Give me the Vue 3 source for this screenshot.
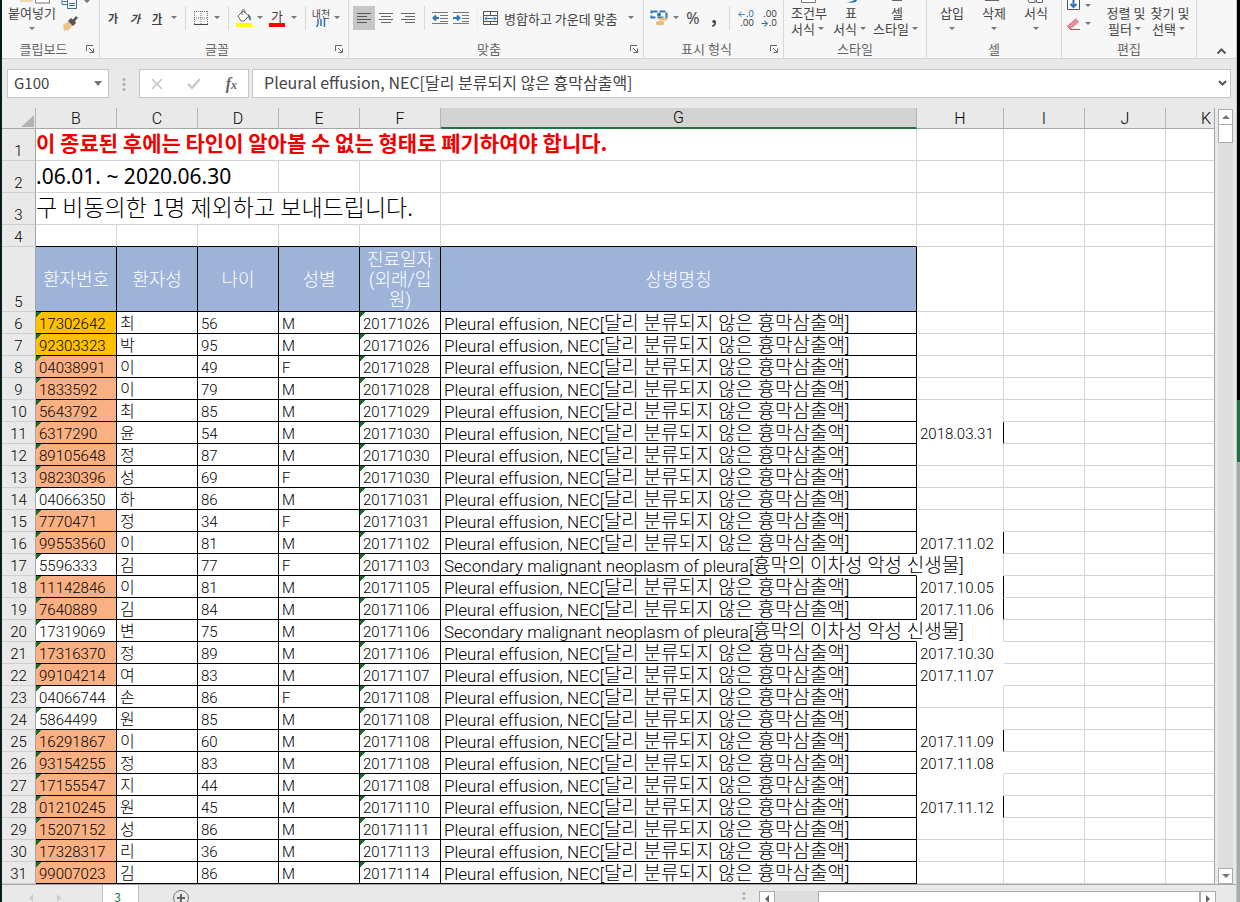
<script setup>
const columns = [
  { name: 'B', cls: 'w-std' },
  { name: 'C', cls: 'w-std' },
  { name: 'D', cls: 'w-std' },
  { name: 'E', cls: 'w-std' },
  { name: 'F', cls: 'w-std' },
  { name: 'G', cls: 'w-wide', selected: true },
  { name: 'H', cls: 'w-date' },
  { name: 'I', cls: 'w-std' },
  { name: 'J', cls: 'w-std' },
  { name: 'K', cls: 'w-std' },
]

const effusion = ['Pleural effusion, NEC[', '달리 분류되지 않은 흉막삼출액]']
const neoplasm = ['Secondary malignant neoplasm of pleura[', '흉막의 이차성 악성 신생물]']

// id, fill, family name, age, sex, visit date, note, note has right border, is neoplasm
const source = [
  ['17302642', 'gold', '최', 56, 'M', '20171026'],
  ['92303323', 'gold', '박', 95, 'M', '20171026'],
  ['04038991', 'peach', '이', 49, 'F', '20171028'],
  ['1833592', 'peach', '이', 79, 'M', '20171028'],
  ['5643792', 'peach', '최', 85, 'M', '20171029'],
  ['6317290', 'peach', '윤', 54, 'M', '20171030', '2018.03.31', true],
  ['89105648', 'peach', '정', 87, 'M', '20171030'],
  ['98230396', 'peach', '성', 69, 'F', '20171030'],
  ['04066350', '', '하', 86, 'M', '20171031'],
  ['7770471', 'peach', '정', 34, 'F', '20171031'],
  ['99553560', 'peach', '이', 81, 'M', '20171102', '2017.11.02', true],
  ['5596333', '', '김', 77, 'F', '20171103', '', false, true],
  ['11142846', 'peach', '이', 81, 'M', '20171105', '2017.10.05', true],
  ['7640889', 'peach', '김', 84, 'M', '20171106', '2017.11.06', true],
  ['17319069', '', '변', 75, 'M', '20171106', '', false, true],
  ['17316370', 'peach', '정', 89, 'M', '20171106', '2017.10.30', false],
  ['99104214', 'peach', '여', 83, 'M', '20171107', '2017.11.07', false],
  ['04066744', '', '손', 86, 'F', '20171108'],
  ['5864499', '', '원', 85, 'M', '20171108'],
  ['16291867', 'peach', '이', 60, 'M', '20171108', '2017.11.09', true],
  ['93154255', 'peach', '정', 83, 'M', '20171108', '2017.11.08', false],
  ['17155547', 'peach', '지', 44, 'M', '20171108'],
  ['01210245', 'peach', '원', 45, 'M', '20171110', '2017.11.12', true],
  ['15207152', 'peach', '성', 86, 'M', '20171111'],
  ['17328317', 'peach', '리', 36, 'M', '20171113'],
  ['99007023', 'peach', '김', 86, 'M', '20171114'],
]

const filled = (r) => !!r && (!!r[6] || !!r[8])

const rows = source.map((r, i) => ({
  num: i + 6,
  id: r[0],
  fill: r[1],
  name: r[2],
  age: r[3],
  sex: r[4],
  date: r[5],
  note: r[6] || '',
  spill: !!r[8],
  text: r[8] ? neoplasm : effusion,
  noteClasses: {
    'no-bottom': filled(r) || filled(source[i + 1]),
    'no-right': !!r[6] && !r[7],
    'ink-right': !!r[7],
  },
}))

const heads = ['환자번호', '환자성', '나이', '성별', '진료일자 (외래/입원)', '상병명칭']
const styleButtons = [['조건부', '서식', 'w50'], ['표', '서식', 'w34'], ['셀', '스타일', 'w58']]
const cellButtons = ['삽입', '삭제', '서식']
const findButtons = ['정렬 및|필터', '찾기 및|선택']
</script>

<template>
  <div class="desktop">
    <div class="app-window">
      <header class="ribbon">
        <section class="group g-clip">
          <div class="tools">
            <button class="stack paste" aria-label="붙여넣기">
              <svg class="peek" width="44" height="5" viewBox="0 0 44 5"><path d="M10 0v2h13V0" fill="#f0d9ae" /><path d="M25.500 0v3h14V0" fill="#fff" stroke="#777" /></svg>
              <span>붙여넣기</span><i class="arrow"></i>
            </button>
            <div class="clip-side">
              <div class="line">
                <svg width="18" height="10" viewBox="0 0 18 10"><path d="M1 0v4.500h6" fill="none" stroke="#41719c" /><path d="M6.500 0v8.500h9V0M8 3.500h6M8 5.500h6M2 1.500h4" fill="none" stroke="#41719c" /></svg>
                <i class="arrow"></i>
              </div>
              <svg width="18" height="18" viewBox="0 0 18 18"><path d="M2 11l6-4 4 4-5 6-2-1-2 1z" fill="#efc389" /><path d="M7 7l3-3 2 1.500L15 2l2 2-3 3 1 2-3 3z" fill="#555" /></svg>
            </div>
          </div>
          <div class="caption"><span>클립보드</span><svg class="launch" width="9" height="9" viewBox="0 0 9 9"><path d="M.5 6V.5H7M3 3l4 4M7.500 3.500v4h-4" fill="none" stroke="#666" /></svg></div>
        </section>

        <section class="group g-font">
          <div class="tools mid">
            <button class="t22 strong">가</button>
            <button class="t22 strong slant">가</button>
            <button class="t22 strong under">가</button>
            <i class="arrow"></i><i class="bar"></i>
            <button class="t20" aria-label="테두리"><svg width="14" height="14" viewBox="0 0 14 14"><path d="M.5 0v14M7 0v14M13.500 0v14M0 .5h14M0 7h14" stroke="#777" stroke-dasharray="1 1" fill="none" /><path d="M0 13.500h14" stroke="#444" /></svg></button>
            <i class="arrow"></i><i class="bar"></i>
            <button class="t20" aria-label="채우기 색"><svg width="18" height="18" viewBox="0 0 18 18"><path d="M3 7l5-5 6 5-5 5H6z" fill="#fff" stroke="#666" /><path d="M7 6V1.500q1.500-2 3 0V4" fill="none" stroke="#666" /><path d="M13 5q4 2 2.500 7Q13 10 13 5z" fill="#41719c" /><path d="M1 14h16v4H1z" fill="#ff0" /></svg></button>
            <i class="arrow"></i>
            <button class="t22 color-a"><span>가</span></button>
            <i class="arrow"></i><i class="bar"></i>
            <button class="t20 ruby" aria-label="윗주 필드"><span>내천</span><svg width="10" height="8" viewBox="0 0 10 8"><path d="M2 0v5L.5 8M5 0v7M8.500 0v8" stroke="#2e75b6" stroke-width="1.500" fill="none" /></svg></button>
            <i class="arrow"></i>
          </div>
          <div class="caption"><span>글꼴</span><svg class="launch" width="9" height="9" viewBox="0 0 9 9"><path d="M.5 6V.5H7M3 3l4 4M7.500 3.500v4h-4" fill="none" stroke="#666" /></svg></div>
        </section>

        <section class="group g-align">
          <div class="tools mid">
            <button class="t22 pressed" aria-label="왼쪽 맞춤"><svg width="14" height="12" viewBox="0 0 14 12"><path d="M0 1.500h14M0 4.500h10M0 7.500h14M0 10.500h10" stroke="#555" /></svg></button>
            <button class="t22" aria-label="가운데 맞춤"><svg width="14" height="12" viewBox="0 0 14 12"><path d="M0 1.500h14M2 4.500h10M0 7.500h14M2 10.500h10" stroke="#666" /></svg></button>
            <button class="t22" aria-label="오른쪽 맞춤"><svg width="14" height="12" viewBox="0 0 14 12"><path d="M0 1.500h14M4 4.500h10M0 7.500h14M4 10.500h10" stroke="#666" /></svg></button>
            <i class="bar"></i>
            <button class="t20" aria-label="내어쓰기"><svg width="16" height="14" viewBox="0 0 16 14"><path d="M0 1.500h16M8 4.500h8M8 7.500h8M8 10.500h8M0 12.500h16" stroke="#777" /><path d="M7 7H2M4 4.500L1.500 7 4 9.500" stroke="#2e75b6" stroke-width="2" fill="none" /></svg></button>
            <button class="t22" aria-label="들여쓰기"><svg width="16" height="14" viewBox="0 0 16 14"><path d="M0 1.500h16M9 4.500h7M9 7.500h7M9 10.500h7M0 12.500h16" stroke="#777" /><path d="M0 7h5M4 4.500L6.500 7 4 9.500" stroke="#2e75b6" stroke-width="2" fill="none" /></svg></button>
            <i class="bar faint"></i>
            <button class="merge"><svg width="16" height="15" viewBox="0 0 16 15"><path d="M.5.5h14v13H.5zM.5 4.500h14M.5 10.500h14M7.500.5v4M7.500 10.500v3" fill="none" stroke="#555" /><path d="M2 7.500h11M4 5.500l-2 2 2 2M11 5.500l2 2-2 2" stroke="#2e75b6" fill="none" /></svg><span>병합하고 가운데 맞춤</span></button>
            <i class="arrow"></i>
          </div>
          <div class="caption"><span>맞춤</span><svg class="launch" width="9" height="9" viewBox="0 0 9 9"><path d="M.5 6V.5H7M3 3l4 4M7.500 3.500v4h-4" fill="none" stroke="#666" /></svg></div>
        </section>

        <section class="group g-num">
          <div class="tools mid">
            <button class="t22" aria-label="회계 표시 형식"><svg width="18" height="16" viewBox="0 0 18 16"><path d="M1.500 1.500h15v6h-15z" fill="#fff" stroke="#2e75b6" stroke-width="2" stroke-dasharray="6 2" /><circle cx="9" cy="4.500" r="2" fill="#2e75b6" /><path d="M9 8.500q4-2 8 0v2H9zM6 12q4-2 8 0v2.500q-4 1.500-8 0z" fill="#eeb872" /></svg></button>
            <i class="arrow"></i>
            <button class="t22 pct">%</button>
            <button class="t20 comma">,</button>
            <i class="bar"></i>
            <button class="dec" aria-label="자릿수 늘림"><span class="blue">←.0</span><span>.00</span></button>
            <button class="dec" aria-label="자릿수 줄임"><span>.00</span><span><b class="blue">→</b>.0</span></button>
          </div>
          <div class="caption"><span>표시 형식</span><svg class="launch" width="9" height="9" viewBox="0 0 9 9"><path d="M.5 6V.5H7M3 3l4 4M7.500 3.500v4h-4" fill="none" stroke="#666" /></svg></div>
        </section>

        <section class="group g-style">
          <div class="tools">
            <button v-for="(b, i) in styleButtons" :key="i" class="stack" :class="b[2]">
              <svg class="peek" width="18" height="5" viewBox="0 0 18 5">
                <path v-if="i === 0" d="M1.500 0v2.500h14V0" fill="#fff" stroke="#777" />
                <path v-else-if="i === 1" d="M4 2q6 0 8-2h3q-1 4-11 2z" fill="#2e75b6" />
                <path v-else d="M4 .5h10" stroke="#666" />
              </svg>
              <span>{{ b[0] }}</span><span class="second">{{ b[1] }}<i class="arrow"></i></span>
            </button>
          </div>
          <div class="caption"><span>스타일</span></div>
        </section>

        <section class="group g-cells">
          <div class="tools">
            <button v-for="(b, i) in cellButtons" :key="i" class="stack w42">
              <svg class="peek" width="18" height="5" viewBox="0 0 18 5">
                <path v-if="i === 1" d="M0 .5h14" stroke="#666" />
                <path v-if="i === 2" d="M1 0l1 2.500h6V0M9.500 0v2.500h6V0" fill="none" stroke="#666" />
              </svg>
              <span>{{ b }}</span><i class="arrow"></i>
            </button>
          </div>
          <div class="caption"><span>셀</span></div>
        </section>

        <section class="group g-edit">
          <div class="tools">
            <div class="edit-side">
              <div class="line"><svg width="16" height="11" viewBox="0 0 16 11"><path d="M1.500 0v9.500h12V0" fill="#fff" stroke="#555" /><path d="M7.500 0v7M4.500 4l3 3 3-3" fill="none" stroke="#2e75b6" stroke-width="2" /></svg><i class="arrow"></i></div>
              <div class="line"><svg width="16" height="14" viewBox="0 0 16 14"><path d="M2 8l8-7 3 4-8 7H3z" fill="#e8899c" /><path d="M1 8.500l3 3.500M4 12.500h10" stroke="#b0505f" fill="none" /></svg><i class="arrow"></i></div>
            </div>
            <button v-for="b in findButtons" :key="b" class="stack w44">
              <svg class="peek" width="18" height="5"></svg>
              <span>{{ b.split('|')[0] }}</span><span class="second">{{ b.split('|')[1] }}<i class="arrow"></i></span>
            </button>
          </div>
          <div class="caption"><span>편집</span></div>
        </section>

        <section class="collapse"><button aria-label="리본 메뉴 축소"><svg width="9" height="6" viewBox="0 0 9 6"><path d="M.5 5.500l4-4 4 4" fill="none" stroke="#555" stroke-width="2" /></svg></button></section>
      </header>

      <div class="formula-row">
        <div class="name-box"><input aria-label="이름 상자" value="G100" /><i class="arrow big"></i></div>
        <i class="grip"></i>
        <div class="fx-box">
          <svg width="12" height="12" viewBox="0 0 12 12"><path d="M1 1l10 10M11 1L1 11" stroke="#c4c4c4" stroke-width="1.500" /></svg>
          <svg width="14" height="12" viewBox="0 0 14 12"><path d="M1 6l4 4 8-9" fill="none" stroke="#c4c4c4" stroke-width="2" /></svg>
          <span class="fx">f<small>x</small></span>
        </div>
        <div class="formula">
          <input aria-label="수식 입력줄" value="Pleural effusion, NEC[달리 분류되지 않은 흉막삼출액]" />
          <svg width="9" height="7" viewBox="0 0 9 7"><path d="M1 1l3.500 3.500L8 1" fill="none" stroke="#555" stroke-width="2" /></svg>
        </div>
      </div>

      <div class="sheet-area">
        <div class="sheet">
          <table>
            <colgroup>
              <col class="w-num" />
              <col v-for="c in columns" :key="c.name" :class="c.cls" />
            </colgroup>
            <thead>
              <tr class="letters">
                <th class="corner"><svg width="14" height="14" viewBox="0 0 14 14"><path d="M14 1v12H1z" fill="#b3b3b3" /></svg></th>
                <th v-for="c in columns" :key="c.name" :class="{ selected: c.selected }">{{ c.name }}</th>
              </tr>
            </thead>
            <tbody>
              <tr class="tall">
                <th>1</th>
                <td colspan="6" class="notice">이 종료된 후에는 타인이 알아볼 수 없는 형태로 폐기하여야 합니다.</td>
                <td></td><td></td><td></td><td></td>
              </tr>
              <tr class="tall">
                <th>2</th>
                <td colspan="3" class="period">.06.01. ~ 2020.06.30</td>
                <td></td><td></td><td></td><td></td><td></td><td></td><td></td>
              </tr>
              <tr class="tall">
                <th>3</th>
                <td colspan="5" class="remark">구 비동의한 1명 제외하고 보내드립니다.</td>
                <td></td><td></td><td></td><td></td><td></td>
              </tr>
              <tr class="row before-head">
                <th>4</th>
                <td v-for="c in columns" :key="c.name"></td>
              </tr>
              <tr class="field-row">
                <th>5</th>
                <td v-for="h in heads" :key="h" class="field">{{ h }}</td>
                <td></td><td></td><td></td><td></td>
              </tr>
              <tr v-for="r in rows" :key="r.num" class="row">
                <th>{{ r.num }}</th>
                <td class="ink flagged" :class="r.fill">{{ r.id }}</td>
                <td class="ink name">{{ r.name }}</td>
                <td class="ink">{{ r.age }}</td>
                <td class="ink">{{ r.sex }}</td>
                <td class="ink flagged">{{ r.date }}</td>
                <td class="ink disease" :class="{ spill: r.spill }">{{ r.text[0] }}<span class="ko">{{ r.text[1] }}</span></td>
                <td :class="r.noteClasses">{{ r.note }}</td>
                <td></td><td></td><td></td>
              </tr>
            </tbody>
          </table>
        </div>
        <div class="v-scroll">
          <button aria-label="위로"><i class="tri up"></i></button>
          <div class="v-thumb"></div>
          <div class="v-track"></div>
          <button aria-label="아래로"><i class="tri down"></i></button>
        </div>
      </div>

      <footer class="tabs">
        <div class="nav"><i class="tri left pale"></i><i class="tri right pale"></i></div>
        <button class="tab">3</button>
        <button class="add" aria-label="새 시트"><svg width="18" height="18" viewBox="0 0 18 18"><circle cx="9" cy="9" r="7.500" fill="none" stroke="#777" /><path d="M9 5v8M5 9h8" stroke="#666" stroke-width="2" /></svg></button>
        <i class="grip low"></i>
        <div class="h-scroll">
          <button aria-label="왼쪽으로"><i class="tri left"></i></button>
          <div class="h-track"></div>
          <div class="h-thumb"></div>
          <button aria-label="오른쪽으로"><i class="tri right"></i></button>
        </div>
      </footer>
    </div>
    <div class="behind"></div>
  </div>
</template>

<style>
html,
body {
  margin: 0;
  overflow: hidden;
}
</style>

<style scoped>
.desktop {
  display: flex;
  height: 100vh;
  overflow: hidden;
  background: #0a1c1a;
  padding-left: 2px;
  box-sizing: border-box;
  font-family: "Noto Sans CJK KR", sans-serif;
  font-size: 13px;
  color: #444;
}
.app-window {
  flex: 1;
  min-width: 0;
  display: flex;
  flex-direction: column;
  background: #e9e9e9;
}
.behind {
  width: 4px;
  background: linear-gradient(#000 0 400px, #1e7145 400px 462px, #a3adaa 462px);
  border-left: 1px solid #b9cfc6;
  box-sizing: border-box;
}
button {
  border: 0;
  padding: 0;
  margin: 0;
  background: none;
  font: inherit;
  color: inherit;
}
svg {
  display: block;
  flex: none;
}

/* Ribbon */
.ribbon {
  display: flex;
  flex: none;
  height: 58px;
  background: #f7f7f7;
  border-bottom: 1px solid #d2d2d2;
}
.group {
  flex: none;
  box-sizing: border-box;
  border-right: 1px solid #d9d9d9;
  display: flex;
  flex-direction: column;
}
.g-clip { width: 98px; }
.g-font { width: 249px; }
.g-align { width: 295px; }
.g-num { width: 140px; }
.g-style { width: 143px; }
.g-cells { width: 135px; }
.g-edit { width: 135px; }
.tools {
  display: flex;
  height: 40px;
  padding-left: 4px;
}
.tools.mid {
  align-items: center;
  height: 36px;
  padding: 0 0 4px 2px;
}
.g-align .tools.mid { padding-left: 4px; }
.g-num .tools.mid { padding-left: 4px; }
.g-style .tools { padding-left: 0; }
.caption {
  position: relative;
  height: 18px;
  line-height: 18px;
  text-align: center;
  color: #666;
  padding-right: 14px;
}
.g-style .caption,
.g-cells .caption,
.g-edit .caption { padding-right: 0; }
.launch {
  position: absolute;
  right: 4px;
  bottom: 4px;
}
.arrow {
  flex: none;
  width: 12px;
  height: 4px;
  display: inline-flex;
  justify-content: center;
}
.arrow::before {
  content: "";
  border: 3px solid transparent;
  border-top-color: #777;
  border-bottom: 0;
}
.arrow.big { height: 5px; }
.arrow.big::before { border-width: 5px 4px 0; }
.bar {
  flex: none;
  width: 1px;
  height: 24px;
  margin: 0 5px;
  background: #d9d9d9;
}
.bar.faint { background: #eee; }
.t20, .t22 {
  flex: none;
  width: 20px;
  height: 24px;
  display: flex;
  align-items: center;
  justify-content: center;
}
.t22 { width: 22px; }
.strong { font-weight: 700; font-size: 11px; }
.slant { font-style: italic; }
.under { text-decoration: underline; }
.pressed { background: #c6c6c6; }
.color-a span {
  line-height: 14px;
  border-bottom: 4px solid #f00;
  padding: 0 2px;
}
.ruby {
  flex-direction: column;
  font-size: 10px;
  line-height: 10px;
}
.ruby span { white-space: nowrap; }
.merge {
  display: flex;
  align-items: center;
  gap: 5px;
  width: 142px;
  white-space: nowrap;
}
.pct { font-family: "Noto Sans", sans-serif; font-size: 16px; }
.comma {
  font-size: 18px;
  font-weight: 700;
  line-height: 18px;
  align-items: flex-start;
}
.dec {
  width: 23px;
  display: flex;
  flex-direction: column;
  align-items: flex-end;
  font: 9px/9px Inter, sans-serif;
  white-space: nowrap;
  padding-right: 4px;
}
.blue { color: #2e75b6; }
.stack {
  flex: none;
  display: flex;
  flex-direction: column;
  align-items: center;
  line-height: 16px;
  white-space: nowrap;
}
.stack > .arrow { margin-top: 6px; }
.second { display: flex; align-items: center; }
.paste { width: 52px; }
.w34 { width: 34px; }
.w42 { width: 42px; }
.w44 { width: 44px; }
.w50 { width: 50px; }
.w58 { width: 58px; }
.clip-side { padding-left: 3px; }
.line { display: flex; align-items: center; height: 14px; }
.clip-side .line { height: 10px; margin-bottom: 4px; padding-bottom: 0; }
.clip-side .line .arrow { margin-left: 2px; margin-bottom: 6px; }
.edit-side { width: 38px; }
.edit-side .line { height: 11px; margin-bottom: 7px; }
.g-edit .tools { padding-left: 4px; }
.collapse {
  flex: 1;
  display: flex;
  justify-content: flex-end;
  align-items: flex-end;
  padding: 0 10px 4px 0;
}

/* Formula bar */
.formula-row {
  flex: none;
  display: flex;
  align-items: center;
  height: 49px;
  padding: 0 5px;
}
.name-box, .fx-box, .formula {
  box-sizing: border-box;
  height: 29px;
  background: #fff;
  border: 1px solid #c6c6c6;
  display: flex;
  align-items: center;
}
.name-box { width: 102px; padding-right: 4px; }
.name-box input, .formula input {
  flex: 1;
  min-width: 0;
  border: 0;
  outline: 0;
  padding: 0 0 2px 6px;
  background: none;
  font: 15px "Noto Sans CJK KR", sans-serif;
  color: #444;
}
.formula input { font-size: 16px; padding: 0 0 3px 11px; }
.grip {
  flex: none;
  width: 30px;
  height: 14px;
  background: radial-gradient(circle, #b0b0b0 1px, transparent 2px) center top / 30px 5px;
}
.fx-box { width: 110px; padding: 0 11px; justify-content: space-between; margin-right: 3px; }
.fx { font: italic 700 16px "Liberation Serif", serif; color: #666; }
.fx small { font-size: 12px; }
.formula { flex: 1; padding-right: 3px; }

/* Sheet */
.sheet-area {
  flex: none;
  display: flex;
  min-height: 0;
}
.sheet {
  flex: 1;
  min-width: 0;
  overflow: hidden;
  border-right: 1px solid #a6a6a6;
}
table {
  table-layout: fixed;
  width: 1245px;
  border-collapse: separate;
  border-spacing: 0;
  font-family: Roboto, "Noto Sans CJK KR", sans-serif;
  font-size: 15px;
  font-weight: 300;
  color: #000;
  background: #fff;
}
.w-num { width: 34px; }
.w-std { width: 81px; }
.w-wide { width: 476px; }
.w-date { width: 87px; }
th, td {
  box-sizing: border-box;
  padding: 2px 3px 0;
  border-right: 1px solid #d4d4d4;
  border-bottom: 1px solid #d4d4d4;
  white-space: nowrap;
  text-align: left;
  line-height: 18px;
}
th {
  background: #e9e9e9;
  border-right-color: #a6a6a6;
  border-bottom-color: #cfcfcf;
  text-align: center;
  vertical-align: bottom;
  font-weight: 300;
  padding: 0;
}
.letters th {
  height: 21px;
  border-bottom-color: #a6a6a6;
  border-right-color: #b5b5b5;
  font-size: 16px;
}
.letters .selected {
  background: #d3d3d3;
  border-bottom: 2px solid #217346;
}
.corner svg { margin-left: 18px; }
.tall > * { height: 32px; }
.row > * { height: 22px; }
.field-row > * { height: 65px; }
.notice, .period, .remark { padding: 0; vertical-align: top; }
.notice { font: 700 21px/26px "Noto Sans CJK KR", sans-serif; color: #f00000; }
.period { font: 400 21px/30px "Noto Sans", sans-serif; }
.remark { font: 300 23px/26px "Noto Sans CJK KR", sans-serif; }
.before-head td:nth-child(-n+7) { border-bottom-color: #000; }
.field {
  background: #9db3d8;
  color: #fff;
  text-align: center;
  white-space: normal;
  font-size: 18px;
  line-height: 20px;
  border-color: #000;
}
.ink { border-color: #000; }
.gold { background: #ffc000; }
.peach { background: #f9b183; }
.flagged {
  background-image: linear-gradient(135deg, #1e6b2e 4px, transparent 4px);
}
.disease { font-size: 17px; }
.ko { font-size: 19px; line-height: 0; }
.name { font-size: 16px; }
.spill { border-right-color: #fff; }
.no-bottom { border-bottom-color: #fff; }
.no-right { border-right-color: #fff; }
.ink-right { border-right-color: #000; }

.v-scroll {
  width: 15px;
  margin: 1px 3px 0;
  display: flex;
  flex-direction: column;
  background: #dedede;
}
.v-scroll button, .h-scroll button, .v-thumb, .h-thumb {
  box-sizing: border-box;
  background: #fff;
  border: 1px solid #ababab;
  display: flex;
  align-items: center;
  justify-content: center;
}
.v-scroll button { height: 16px; }
.v-thumb { height: 18px; border-top: 0; }
.v-track { flex: 1; }
.tri { border: 4px solid transparent; }
.up { border-bottom-color: #777; border-top: 0; }
.down { border-top-color: #777; border-bottom: 0; }
.left { border-right-color: #666; border-left: 0; }
.right { border-left-color: #666; border-right: 0; }
.left.pale { border-right-color: #ccc; }
.right.pale { border-left-color: #ccc; }

/* Sheet tabs */
.tabs {
  flex: 1;
  display: flex;
  align-items: flex-start;
  border-top: 1px solid #a6a6a6;
  min-height: 0;
  overflow: hidden;
}
.nav {
  width: 100px;
  display: flex;
  gap: 24px;
  box-sizing: border-box;
  padding: 9px 0 0 27px;
}
.tab {
  width: 37px;
  height: 18px;
  background: #fff;
  border: 1px solid #c0c0c0;
  border-width: 0 1px;
  color: #217346;
  font-size: 12px;
  line-height: 18px;
  padding: 3px 6px 0 0;
}
.add { margin: 4px 0 0 33px; }
.grip.low { margin: 6px 0 0 auto; }
.h-scroll {
  width: 457px;
  height: 16px;
  margin: 6px 20px 0 0;
  display: flex;
  background: #dedede;
}
.h-scroll button { width: 16px; }
.h-track { width: 43px; }
.h-thumb { flex: 1; }
</style>
